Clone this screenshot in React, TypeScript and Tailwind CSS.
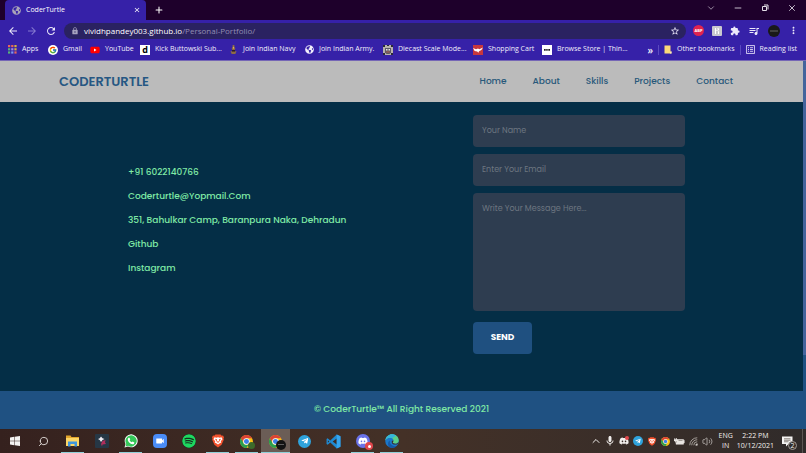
import type { ReactNode } from "react";
import { FcGoogle } from "react-icons/fc";
import { FaDiscord, FaGlobeAmericas, FaSpotify, FaTelegramPlane, FaYoutube } from "react-icons/fa";
import {
    MdArrowBack,
    MdArrowForward,
    MdClose,
    MdExtension,
    MdLock,
    MdMic,
    MdMoreVert,
    MdQueueMusic,
    MdRefresh,
    MdStarBorder,
    MdVideocam,
} from "react-icons/md";
import { ChevronDown, ChevronUp, Minus, Plus, Search, Volume2, X } from "lucide-react";

const appColors = ["#e8665a", "#e8665a", "#d9b23c", "#58b27a", "#a08be8", "#d9b23c", "#58b27a", "#7d9cf0", "#e8665a"];

function AppsIcon() {
    return (
        <svg viewBox="0 0 9 9" className="size-[9px]">
            {appColors.map((color, i) => (
                <rect key={i} x={(i % 3) * 3.2} y={Math.floor(i / 3) * 3.2} width="2.2" height="2.2" fill={color} />
            ))}
        </svg>
    );
}

function NavyIcon() {
    return (
        <svg viewBox="0 0 10 10" className="size-[9px]">
            <path d="M4 0h2v2l1 2-1 3h2.4L7 10H3L1.6 7H4L3 4l1-2z" fill="#8e6b45" />
            <path d="M3.4 5.5h3.2v1.8H3.4z" fill="#2a1c26" />
            <path d="M4.4 2h1.2v2H4.4z" fill="#d8b26a" />
        </svg>
    );
}

function DiecastIcon() {
    return (
        <svg viewBox="0 0 10 10" className="size-[10px]">
            <rect width="10" height="10" fill="#b9b3ae" />
            <path d="M0 0h2v2H0zM8 0h2v2H8zM0 8h2v2H0zM8 8h2v2H8zM4 0h2v1H4z" fill="#2b2a35" />
            <path d="M2 3h6v4.5L6.5 9h-3L2 7.5z" fill="#5d5a66" />
            <path d="M3 4h1.5v1.4H3zM5.5 4H7v1.4H5.500z" fill="#e9e4df" />
            <path d="M3.4 6.5h3.2v1H3.4z" fill="#b65f4b" />
        </svg>
    );
}

function CartIcon() {
    return (
        <svg viewBox="0 0 10 10" className="size-[10px]">
            <rect width="10" height="10" fill="#c8373c" />
            <path d="M0 3l3 1.2L5 3.4l1.4.8L10 2.4 8.400 5 6 6.2l-.6 1.6-1.2-1.4L1.6 6z" fill="#fff" />
        </svg>
    );
}

function FolderIcon() {
    return (
        <svg viewBox="0 0 8 9" className="h-[9px] w-2">
            <path d="M.5.5h6v6.2h1V8.5h-7z" fill="#fbd979" />
            <path d="M6.5 6.2h1v2.3h-1.6z" fill="#fff0bd" />
        </svg>
    );
}

function ReadingIcon() {
    return (
        <svg viewBox="0 0 9 9" className="size-[9px]" fill="none" stroke="#dcd7f5" strokeWidth=".9">
            <rect x=".6" y=".6" width="7.8" height="7.8" />
            <path d="M2 2.7h1M2 4.5h1M2 6.3h1M4 2.7h3M4 4.5h3M4 6.3h3" />
        </svg>
    );
}

function RestoreIcon() {
    return (
        <svg viewBox="0 0 8 8" className="size-2" fill="none" stroke="currentColor">
            <path d="M1.500 2.500h4v4h-4zM3 1h4v4.500" />
        </svg>
    );
}

function ChromeIcon({ className }: { className: string }) {
    return (
        <svg viewBox="0 0 24 24" className={className}>
            <circle cx="12" cy="12" r="12" fill="#fbc116" />
            <path d="M1.6 6A12 12 0 0 1 22.4 6H12a6 6 0 0 0-5.2 9z" fill="#dd4335" />
            <path d="M1.6 6l5.2 9a6 6 0 0 0 10.4 0L12 24A12 12 0 0 1 1.6 6z" fill="#2b9f4f" />
            <circle cx="12" cy="12" r="6" fill="#fff" />
            <circle cx="12" cy="12" r="4.6" fill="#3f7fe8" />
        </svg>
    );
}

function BraveIcon({ className }: { className: string }) {
    return (
        <svg viewBox="0 0 24 26" className={className}>
            <path d="M7 0h10l2.5 2.6L22 2l2 3.6-1 3 .6 1.8-4.4 10.2L12 26l-7.2-5.4L.4 10.4 1 8.6 0 5.6 2 2l2.5.6z" fill="#f4522d" />
            <path d="M5 5.500l4 .8 3-.8 3 .8 4-.8 2 4-3.500 4.200 1 2.300-3 1.500L12 20l-3.500-2.500-3-1.500 1-2.300L3 9.500z" fill="#fff" />
            <path d="M6 8.500l4 1-.5 3 2.500 1.800 2.500-1.800-.5-3 4-1-2.500 4.500L12 17l-3.500-4z" fill="#f4522d" />
        </svg>
    );
}

function TelegramIcon({ className }: { className: string }) {
    return (
        <span className={`flex items-center justify-center rounded-full bg-[#2fa3dc] text-white ${className}`}>
            <FaTelegramPlane className="size-3/5" />
        </span>
    );
}

function WindowsIcon() {
    return (
        <svg viewBox="0 0 20 20" className="size-[10px]" fill="#f4f2f1">
            <path d="M0 2.8l8.5-1.2v7.9H0zM9.5 1.4L20 0v9.5H9.5zM0 10.5h8.5v7.9L0 17.2zM9.5 10.5H20V20L9.5 18.6z" />
        </svg>
    );
}

function ExplorerIcon() {
    return (
        <svg viewBox="0 0 26 24" className="h-3 w-[13px]">
            <path d="M0 1h9l2 3h15v18H0z" fill="#e3a52c" />
            <path d="M0 6h26v16H0z" fill="#fcd667" />
            <path d="M4 13h18v10h-5v-5H9v5H4z" fill="#3f96dd" />
        </svg>
    );
}

function FilmoraIcon() {
    return (
        <svg viewBox="0 0 28 28" className="size-[14px]">
            <rect width="28" height="28" rx="2" fill="#263745" />
            <path d="M12 5l3 3.500 4 1.500-4 2-3 4-2.500-4L6 10l3.500-1.500z" fill="#f2edf4" />
            <path d="M15 14l6-2-1 5 2 3-7 1-1 4-2-5z" fill="#b02e5b" />
        </svg>
    );
}

function WhatsappIcon() {
    return (
        <svg viewBox="0 0 28 28" className="size-[14px]">
            <path d="M1 27l2-7A13 13 0 1 1 8 25z" fill="#fff" />
            <path d="M3 25l1.500-5.200A11.300 11.300 0 1 1 8.300 23.600z" fill="#34c759" />
            <path d="M9 7.500l2-.2 1.500 3.500-1.300 1.700c1 2 2.300 3.200 4.300 4.200l1.700-1.600 3.500 1.700c0 2.500-1.600 3.700-3.700 3.700C12 20 7.500 14.500 7.500 10.500c0-1.300.6-2.300 1.500-3z" fill="#fff" />
        </svg>
    );
}

function VscodeIcon() {
    return (
        <svg viewBox="0 0 28 28" className="size-[15px]">
            <path d="M20 1l7 3v20l-7 3L8 16l-5 4-2-1.200V9.200L3 8l5 4z" fill="#1f8ad2" />
            <path d="M20 8.500L12.500 14l7.500 5.500zM3.500 11.500v5L6 14z" fill="#3b2b24" />
            <path d="M20 1l7 3v20l-7 3z" fill="#35a5ee" />
        </svg>
    );
}

function EdgeIcon() {
    return (
        <svg viewBox="0 0 28 28" className="size-[14px]">
            <circle cx="14" cy="14" r="13.500" fill="#1a77cb" />
            <path d="M.6 13C2 5 8 .5 14 .5c8 0 13.500 6 13.500 12 0 4.500-3.200 7-7 7-3 0-5-1-5-2.400 0-1 1.500-1.600 1.500-4C17 10 14 7.500 10 7.500c-4.500 0-8 2.500-9.400 5.500z" fill="#5bd08a" />
            <path d="M.6 13C2 5 8 .5 14 .5c4 0 6 1 8 3-4 2-6 4-8 5-1-.7-2.500-1-4-1-4.500 0-8 2.500-9.400 5.500z" fill="#35b6dc" />
            <path d="M10 13c-2 7 4 12 13.500 11.500A13.500 13.500 0 0 1 9 26.500C4 21 6 15 10 13z" fill="#1559a8" />
            <path d="M15.500 17.100c0 1.400 2 2.400 5 2.400 2.400 0 4.500-.9 5.800-2.500l-.8 3c-6 3-12 0-12-3.500 0-2 1-3 2.500-4 2 2-.5 3.200-.5 4.600z" fill="#3b2b24" />
        </svg>
    );
}

function BatteryIcon() {
    return (
        <svg viewBox="0 0 22 14" className="h-[7px] w-[11px]">
            <path d="M6 3h13v1.500h1.500v5.500H19V12.500H4V9h2z" fill="#e9e5e2" stroke="#e9e5e2" />
            <path d="M1 0h1.500v2.500H4V0h1.500v2.500h1V6L5 7v2H2.500V7L0 6V2.500h1z" fill="#e9e5e2" />
            <path d="M9 5h8v1H9z" fill="#58504b" />
        </svg>
    );
}

function WifiIcon() {
    return (
        <svg viewBox="0 0 18 18" className="size-[9px]" fill="none" stroke="#bdb7b3" strokeWidth="1.6">
            <path d="M1.500 16.500A15 15 0 0 1 16.500 1.500M5.500 16.500a11 11 0 0 1 11-11M9.500 16.500a7 7 0 0 1 7-7" />
            <path d="M13.500 16.500a3 3 0 0 1 3-3v3z" fill="#fff" />
        </svg>
    );
}

function NotificationIcon() {
    return (
        <svg viewBox="0 0 22 22" className="size-[11px]" fill="#f5f3f2">
            <path d="M0 1h21v15h-8l-5 5v-5H0z" />
            <path d="M4 5.500h13M4 8.500h13M4 11.500h9" stroke="#554a45" strokeWidth="1.3" />
        </svg>
    );
}

const bookmarks: { title: string; width: string; icon: ReactNode }[] = [
    { title: "Apps", width: "w-10", icon: <AppsIcon /> },
    {
        title: "Gmail",
        width: "w-[42px]",
        icon: (
            <span className="rounded-full bg-white p-px">
                <FcGoogle className="size-2" />
            </span>
        ),
    },
    {
        title: "YouTube",
        width: "w-[50px]",
        icon: (
            <span className="bg-[linear-gradient(white,white)] bg-[length:4px_4px] bg-center bg-no-repeat">
                <FaYoutube className="size-[10px] text-[#f00]" />
            </span>
        ),
    },
    {
        title: "Kick Buttowski Sub...",
        width: "w-[89px]",
        icon: <span className="flex size-[10px] items-center justify-center bg-white text-[9px] leading-none font-bold text-black">d</span>,
    },
    { title: "Join Indian Navy", width: "w-[76px]", icon: <NavyIcon /> },
    { title: "Join Indian Army.", width: "w-[78px]", icon: <FaGlobeAmericas className="size-[9px]" /> },
    { title: "Diecast Scale Mode...", width: "w-[90px]", icon: <DiecastIcon /> },
    { title: "Shopping Cart", width: "w-[69px]", icon: <CartIcon /> },
    {
        title: "Browse Store | Thin...",
        width: "w-[90px]",
        icon: (
            <svg viewBox="0 0 10 10" className="size-[10px]">
                <path d="M0 0h10v10H0z" fill="#fff" />
                <path d="M2 4h1.700v1.700H2zM4.200 4h1.500v1.700H4.200zM6.300 4H8v1.700H6.300z" fill="#222" />
            </svg>
        ),
    },
];

const navLinks = ["Home", "About", "Skills", "Projects", "Contact"];

const contactItems = [
    { text: "+91 6022140766", href: "tel:+916022140766" },
    { text: "Coderturtle@Yopmail.Com", href: "mailto:coderturtle@yopmail.com" },
    { text: "351, Bahulkar Camp, Baranpura Naka, Dehradun", href: "#address" },
    { text: "Github", href: "#github" },
    { text: "Instagram", href: "#instagram" },
];

const taskbarApps: { name: string; icon: ReactNode; open?: boolean; active?: boolean }[] = [
    { name: "Start", icon: <WindowsIcon /> },
    { name: "Search", icon: <Search className="size-[11px] -scale-x-100 text-[#e5dfdc]" strokeWidth={2} /> },
    { name: "File Explorer", icon: <ExplorerIcon />, open: true },
    { name: "Filmora", icon: <FilmoraIcon /> },
    { name: "WhatsApp", icon: <WhatsappIcon />, open: true },
    {
        name: "Zoom",
        icon: (
            <span className="flex size-[14px] items-center justify-center rounded bg-[#4a8cf7] text-white">
                <MdVideocam className="size-[10px]" />
            </span>
        ),
    },
    { name: "Spotify", icon: <FaSpotify className="size-[14px] rounded-full bg-[#17301f] text-[#1ed760]" /> },
    { name: "Brave", icon: <BraveIcon className="h-[14px] w-3" />, open: true },
    {
        name: "Chrome",
        icon: (
            <>
                <ChromeIcon className="size-[13px]" />
                <span className="absolute right-1.5 bottom-1 size-[7px] rounded-full bg-[#3c6a2b]" />
            </>
        ),
        open: true,
    },
    {
        name: "Chrome profile",
        icon: (
            <>
                <ChromeIcon className="size-[13px]" />
                <span className="absolute right-1 bottom-[3px] size-[10px] rounded-full bg-[#131313]" />
                <span className="absolute right-1.5 bottom-2 h-px w-1.5 bg-[#5c5c5c]" />
            </>
        ),
        open: true,
        active: true,
    },
    { name: "Telegram", icon: <TelegramIcon className="size-[13px]" /> },
    { name: "Visual Studio Code", icon: <VscodeIcon /> },
    {
        name: "Discord",
        icon: (
            <>
                <span className="flex size-[14px] items-center justify-center rounded-full bg-[#6a72e8] text-white">
                    <FaDiscord className="size-[10px]" />
                </span>
                <span className="absolute right-1 bottom-[3px] flex size-2 items-center justify-center rounded-full bg-[#e0474c]">
                    <span className="size-[3px] rounded-full bg-white" />
                </span>
            </>
        ),
        open: true,
    },
    { name: "Edge", icon: <EdgeIcon />, open: true },
];

const trayIcons: { name: string; icon: ReactNode }[] = [
    { name: "Show hidden icons", icon: <ChevronUp className="size-3" /> },
    { name: "Microphone", icon: <MdMic className="size-3" /> },
    {
        name: "Discord",
        icon: (
            <>
                <FaDiscord className="size-[10px]" />
                <span className="absolute top-0 right-0.5 size-1 rounded-full bg-[#e0474c]" />
            </>
        ),
    },
    { name: "Telegram", icon: <TelegramIcon className="size-[10px]" /> },
    { name: "Brave", icon: <BraveIcon className="h-[9px] w-2" /> },
    { name: "Chrome", icon: <ChromeIcon className="size-[9px]" /> },
    { name: "Battery", icon: <BatteryIcon /> },
    { name: "Network", icon: <WifiIcon /> },
    { name: "Volume", icon: <Volume2 className="size-[11px] text-[#d5d0cd]" strokeWidth={1.5} /> },
];

function TabStrip() {
    return (
        <div className="flex h-5 items-stretch bg-[#1e002b] pl-[5px] text-white">
            <div className="flex w-[141px] items-center rounded-t-[4px] bg-[#3621a8] pr-[5px] pl-[7px]">
                <FaGlobeAmericas className="size-[9px] text-[#a9a3b8]" />
                <span className="ml-[5px] flex-1 text-[7px]">CoderTurtle</span>
                <button aria-label="Close tab">
                    <MdClose className="size-2" />
                </button>
            </div>
            <button aria-label="New tab" className="ml-2">
                <Plus className="size-[10px]" strokeWidth={2.5} />
            </button>
            <div className="ml-auto flex items-center gap-[17px] pr-[9px] pb-1 text-[#e4dfe8]">
                <button aria-label="Search tabs">
                    <ChevronDown className="size-[10px]" strokeWidth={1.5} />
                </button>
                <button aria-label="Minimize">
                    <Minus className="size-[10px]" />
                </button>
                <button aria-label="Restore" className="px-px">
                    <RestoreIcon />
                </button>
                <button aria-label="Close">
                    <X className="size-[10px]" />
                </button>
            </div>
        </div>
    );
}

function Toolbar() {
    return (
        <div className="flex h-[21px] items-center bg-[#3621a8] pr-[7px] pl-[7px] text-[#ece9fa]">
            <div className="flex gap-[7px]">
                <button aria-label="Back">
                    <MdArrowBack className="size-3" />
                </button>
                <button aria-label="Forward">
                    <MdArrowForward className="size-3 text-[#8478cf]" />
                </button>
                <button aria-label="Reload">
                    <MdRefresh className="size-3" />
                </button>
            </div>
            <div className="ml-[7px] flex h-4 flex-1 items-center rounded-full bg-[#2a2261] pr-1.5 pl-[7px]">
                <MdLock className="size-2 text-[#a8a4c0]" />
                <span className="ml-[5px] flex-1 text-[8px] text-[#928eb1]">
                    <span className="text-white">vividhpandey003.github.io</span>/Personal-Portfolio/
                </span>
                <button aria-label="Bookmark this tab">
                    <MdStarBorder className="size-[10px]" />
                </button>
            </div>
            <div className="ml-[7px] flex items-center gap-2">
                <span className="flex size-[11px] items-center justify-center rounded-full bg-[#e0234f] text-[4px] font-bold text-white">ABP</span>
                <svg viewBox="0 0 20 20" className="size-[10px]">
                    <rect width="20" height="20" rx="2" fill="#c9c8cf" />
                    <path d="M7 4v12M7 11c2-4 6-3 6 0v5M11 5h2v3" stroke="#fff" strokeWidth="2" fill="none" />
                </svg>
                <MdExtension className="size-[10px]" />
                <MdQueueMusic className="size-3" />
                <span className="flex size-3 items-center justify-center rounded-full bg-[#191919]">
                    <span className="h-0.5 w-2 bg-[#3f3f3f]" />
                </span>
                <button aria-label="Menu">
                    <MdMoreVert className="size-[11px]" />
                </button>
            </div>
        </div>
    );
}

function BookmarksBar() {
    return (
        <div className="flex h-5 items-center border-b border-[#7566b6] bg-[#3621a8] pr-[9px] pl-2 pb-0.5 text-[7px] text-[#f1effb]">
            {bookmarks.map((item) => (
                <a key={item.title} href="#bookmark" className={`flex shrink-0 items-center gap-[5px] whitespace-nowrap ${item.width}`}>
                    {item.icon}
                    {item.title}
                </a>
            ))}
            <div className="ml-auto flex items-center gap-[5px] whitespace-nowrap">
                <button aria-label="More bookmarks" className="text-[10px] leading-none font-semibold">»</button>
                <span className="h-2.5 w-px bg-[#5c4bc0]" />
                <a href="#other" className="flex items-center gap-[5px]">
                    <FolderIcon />
                    Other bookmarks
                </a>
                <span className="h-2.5 w-px bg-[#5c4bc0]" />
                <a href="#reading" className="flex items-center gap-[5px]">
                    <ReadingIcon />
                    Reading list
                </a>
            </div>
        </div>
    );
}

function Portfolio() {
    return (
        <div className="flex flex-1 font-[Poppins,Inter,sans-serif]">
            <div className="flex flex-1 flex-col">
                <header className="flex h-[41px] items-center justify-between bg-[#bbbbbb] pr-[70px] pl-[59px]">
                    <a href="#home" className="text-[13px] font-semibold text-[#265783]">CODERTURTLE</a>
                    <nav className="flex gap-[26px] text-[9px] font-medium text-[#28587a]">
                        {navLinks.map((link) => (
                            <a key={link} href={`#${link.toLowerCase()}`}>{link}</a>
                        ))}
                    </nav>
                </header>
                <main className="flex flex-1 items-start justify-between bg-[#042e46] pt-[13px] pr-[118px] pb-9 pl-32">
                    <ul className="pt-[45px] text-[9px] leading-6 font-medium text-[#7fe9a5]">
                        {contactItems.map((item) => (
                            <li key={item.text}>
                                <a href={item.href}>{item.text}</a>
                            </li>
                        ))}
                    </ul>
                    <form className="flex w-[212px] flex-col gap-[7px] text-[8px] text-white">
                        <input
                            type="text"
                            aria-label="Your Name"
                            placeholder="Your Name"
                            className="h-8 rounded-[4px] bg-[#2e3d50] px-[9px] placeholder:text-[#6d7680]"
                        />
                        <input
                            type="email"
                            aria-label="Enter Your Email"
                            placeholder="Enter Your Email"
                            className="h-8 rounded-[4px] bg-[#2e3d50] px-[9px] placeholder:text-[#6d7680]"
                        />
                        <textarea
                            aria-label="Write Your Message Here"
                            placeholder="Write Your Message Here..."
                            className="h-[118px] resize-none rounded-[4px] bg-[#2e3d50] px-[9px] py-2.5 placeholder:text-[#6d7680]"
                        />
                        <button type="submit" className="mt-1 h-8 w-[59px] rounded-[4px] bg-[#1f5080] text-[9px] font-bold">SEND</button>
                    </form>
                </main>
                <footer className="flex h-[38px] items-center justify-center bg-[#1f5182] text-[9px] font-medium text-[#7fe9a5]">
                    © CoderTurtle™ All Right Reserved 2021
                </footer>
            </div>
            <div className="w-[3px] bg-[#1f5182]">
                <div className="h-4/5 bg-[#43649c]" />
            </div>
        </div>
    );
}

function Taskbar() {
    return (
        <div className="flex h-6 items-stretch bg-linear-to-r from-[#35211e] via-[#443127] to-[#302b2a] text-[#f1eeec]">
            {taskbarApps.map((app) => (
                <button
                    key={app.name}
                    aria-label={app.name}
                    className={`relative flex w-[29px] items-center justify-center ${app.active ? "bg-[#6b5d56]" : ""}`}
                >
                    {app.icon}
                    {app.open && <span className={`absolute bottom-0 h-px bg-[#8fd0d8] ${app.active ? "inset-x-0" : "inset-x-[3px]"}`} />}
                </button>
            ))}
            <div className="ml-auto flex items-center">
                {trayIcons.map((item) => (
                    <button key={item.name} aria-label={item.name} className="relative flex w-[14px] items-center justify-center">
                        {item.icon}
                    </button>
                ))}
            </div>
            <div className="ml-1 flex flex-col justify-center text-center text-[7px] leading-[10px]">
                <span>ENG</span>
                <span>IN</span>
            </div>
            <div className="ml-1 flex flex-col justify-center text-center text-[7px] leading-[10px]">
                <span>2:22 PM</span>
                <span>10/12/2021</span>
            </div>
            <button aria-label="Notifications" className="relative mr-[7px] ml-2 flex items-center pr-0.5">
                <NotificationIcon />
                <span className="absolute -right-0.5 bottom-[3px] flex size-[9px] items-center justify-center rounded-full border border-[#a29b97] bg-[#332e2c] text-[7px] leading-none">
                    2
                </span>
            </button>
            <span className="mr-[3px] w-px bg-[#5c5653]" />
        </div>
    );
}

export default function App() {
    return (
        <div className="flex min-h-screen flex-col font-['Open_Sans','Noto_Sans',sans-serif]">
            <TabStrip />
            <Toolbar />
            <BookmarksBar />
            <Portfolio />
            <Taskbar />
        </div>
    );
}
